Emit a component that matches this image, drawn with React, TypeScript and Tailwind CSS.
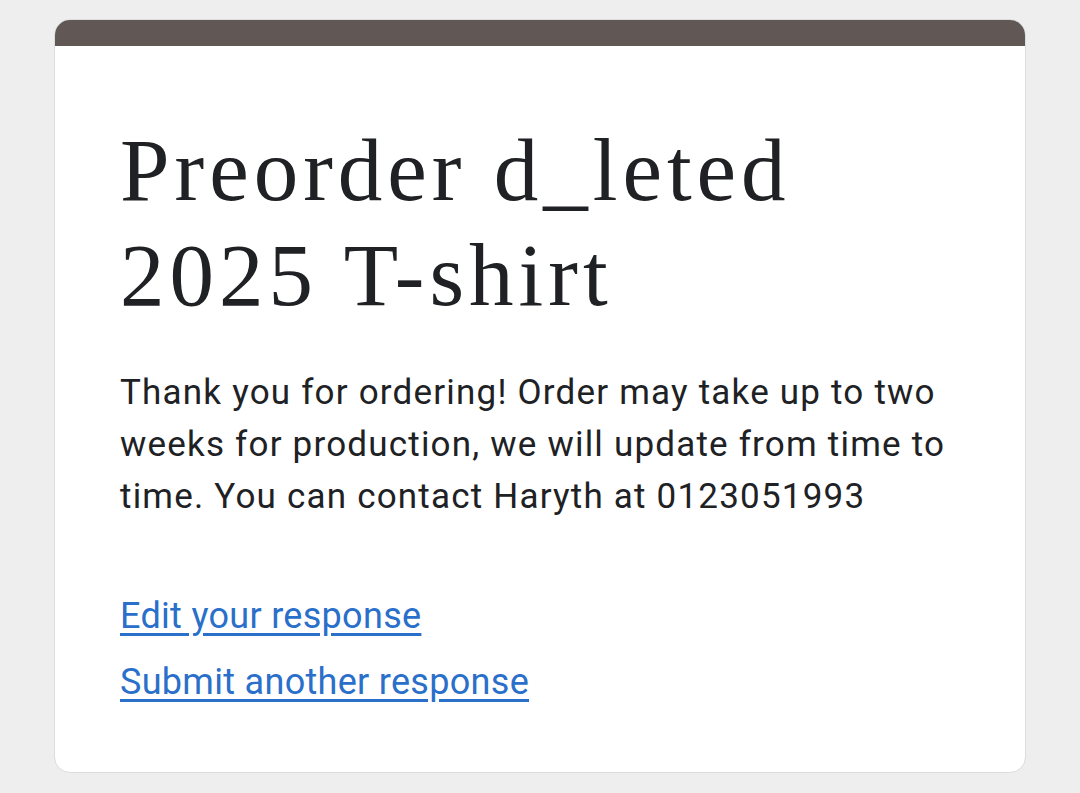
export default function App() {
  return (
    <div className="min-h-[793px] bg-[#eeeeee] px-[54px] pt-[19px] pb-[20px]">
      <div className="w-[972px] rounded-[16px] bg-white overflow-hidden border border-[#dadce0]">
        <div className="h-[26px] bg-[#615856]" />
        <div className="pl-[65px] pr-[40px] pt-[72px] pb-[64px]">
          <h1 className="text-[89px] leading-[105px] tracking-[5px] text-[#202124] font-['Liberation_Serif',serif]">
            Preorder d_leted
            <br />
            2025 T-shirt
          </h1>
          <p className="mt-[39px] text-[35px] leading-[52px] tracking-[1.2px] text-[#202124] font-['Roboto',sans-serif]">
            Thank you for ordering! Order may take up to two weeks for production, we will update from time to
            time. You can contact Haryth at 0123051993
          </p>
          <div className="mt-[67px] flex flex-col gap-[14px] font-['Roboto',sans-serif] text-[36px] leading-[52px] tracking-[0.3px]">
            <a href="#" className="text-[#2a6fc9] underline underline-offset-[5px] w-fit">
              Edit your response
            </a>
            <a href="#" className="text-[#2a6fc9] underline underline-offset-[5px] w-fit">
              Submit another response
            </a>
          </div>
        </div>
      </div>
    </div>
  );
}
